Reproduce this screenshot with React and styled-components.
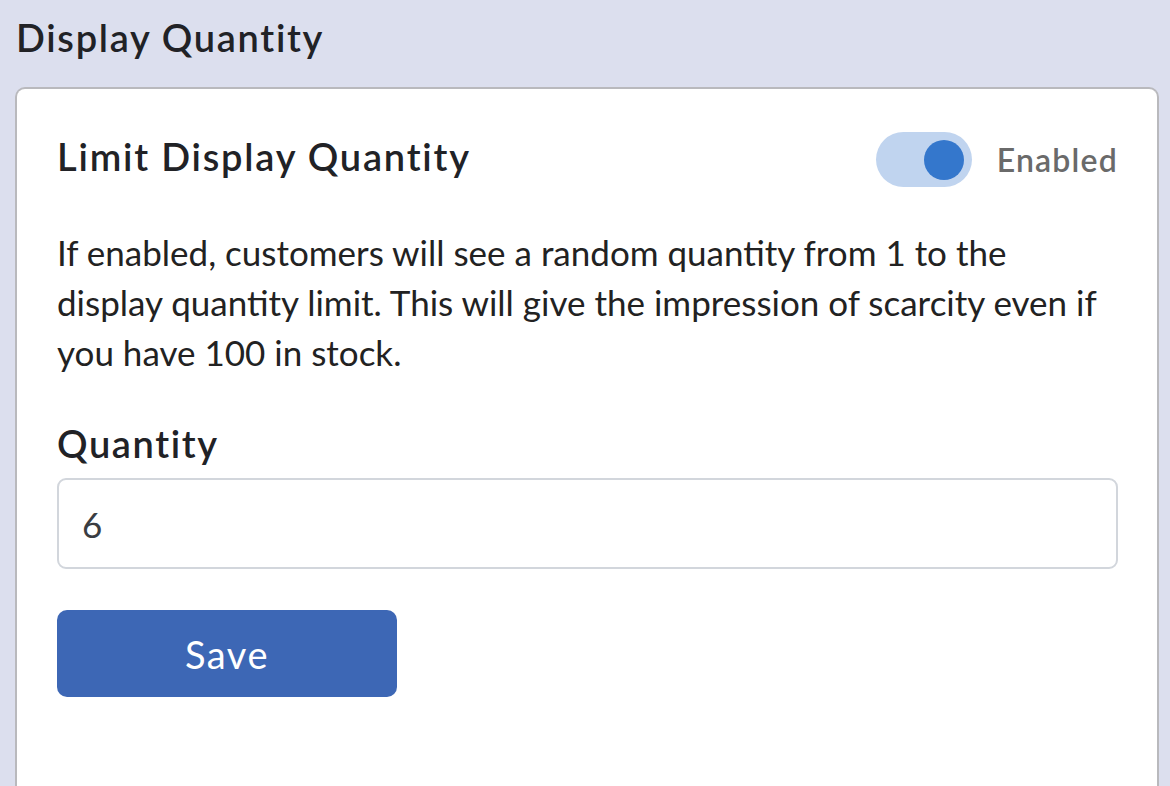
import React from "react";
import styled, { createGlobalStyle } from "styled-components";

const Global = createGlobalStyle`
  html, body { margin: 0; padding: 0; background: #dcdfee; }
  body { font-family: Lato, "Open Sans", sans-serif; color: #212121; overflow: hidden; }
  * { box-sizing: border-box; }
`;

const Page = styled.div`
  height: 786px;
  padding: 12px 11px 0 15px;
  display: flex;
  flex-direction: column;
`;

const PageTitle = styled.h1`
  margin: 0 0 0 1px;
  font-size: 38px;
  line-height: 50px;
  letter-spacing: 1.7px;
  font-weight: 600;
  color: #212226;
`;

const Card = styled.section`
  margin-top: 25px;
  flex: 1;
  background: #fff;
  border: 2px solid #b9b9bd;
  border-bottom: none;
  border-radius: 10px 10px 0 0;
  padding: 43px 39px 0 40px;
`;

const HeaderRow = styled.div`
  display: flex;
  align-items: center;
  justify-content: space-between;
  height: 55px;
`;

const CardTitle = styled.h2`
  margin: 0;
  padding-bottom: 8px;
  font-size: 38px;
  line-height: 50px;
  letter-spacing: 1.8px;
  font-weight: 600;
  color: #212226;
`;

const ToggleWrap = styled.div`
  display: flex;
  align-items: center;
  gap: 25px;
`;

const Track = styled.div`
  width: 96px;
  height: 55px;
  border-radius: 28px;
  background: ${(p) => (p.$on ? "#c0d4ef" : "#d5d5d5")};
  display: flex;
  align-items: center;
  justify-content: ${(p) => (p.$on ? "flex-end" : "flex-start")};
  padding: 0 8px;
`;

const Knob = styled.div`
  width: 40px;
  height: 40px;
  border-radius: 50%;
  background: #3477cc;
`;

const ToggleLabel = styled.span`
  font-size: 32px;
  line-height: 40px;
  letter-spacing: 1.2px;
  font-weight: 600;
  color: #6a6a6a;
`;

const Description = styled.p`
  margin: 40px 0 0;
  font-size: 35px;
  line-height: 50px;
  color: #222;
`;

const FieldLabel = styled.label`
  display: block;
  margin-top: 41px;
  font-size: 38px;
  font-weight: 600;
  line-height: 50px;
  letter-spacing: 1.6px;
  color: #212226;
`;

const Input = styled.input`
  display: block;
  width: 100%;
  height: 91px;
  margin-top: 10px;
  border: 2px solid #d2d6dc;
  border-radius: 9px;
  padding: 0 23px;
  font-family: inherit;
  font-size: 35px;
  color: #3a3d42;
  outline: none;
`;

const Button = styled.button`
  display: block;
  margin-top: 41px;
  width: 340px;
  height: 87px;
  border: none;
  border-radius: 10px;
  background: #3d67b5;
  color: #fff;
  font-family: inherit;
  font-size: 38px;
  letter-spacing: 1.5px;
  font-weight: 400;
`;

export default function App() {
  return (
    <>
      <Global />
      <Page>
        <PageTitle>Display Quantity</PageTitle>
        <Card>
          <HeaderRow>
            <CardTitle>Limit Display Quantity</CardTitle>
            <ToggleWrap>
              <Track $on>
                <Knob />
              </Track>
              <ToggleLabel>Enabled</ToggleLabel>
            </ToggleWrap>
          </HeaderRow>
          <Description>
            If enabled, customers will see a random quantity from 1 to the
            display quantity limit. This will give the impression of scarcity
            even if you have 100 in stock.
          </Description>
          <FieldLabel htmlFor="qty">Quantity</FieldLabel>
          <Input id="qty" defaultValue="6" />
          <Button>Save</Button>
        </Card>
      </Page>
    </>
  );
}
